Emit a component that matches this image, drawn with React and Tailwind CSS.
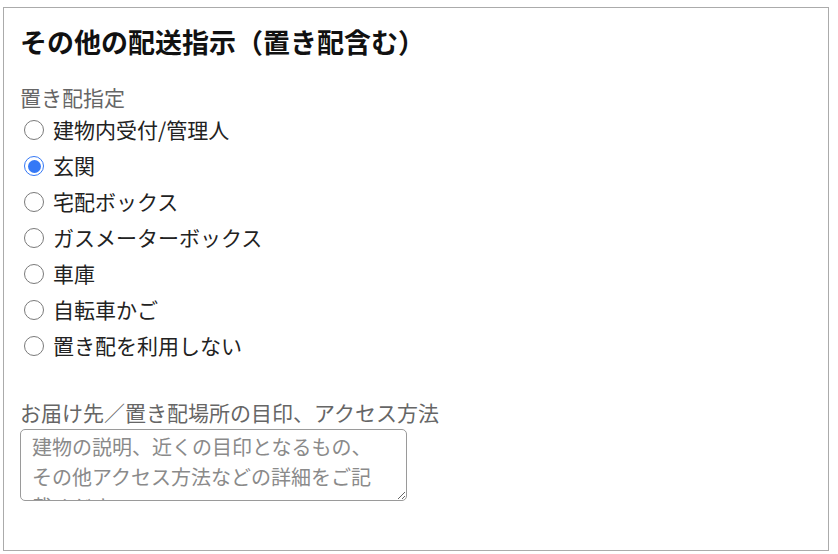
import { useState } from 'react';

const options = [
  '建物内受付/管理人',
  '玄関',
  '宅配ボックス',
  'ガスメーターボックス',
  '車庫',
  '自転車かご',
  '置き配を利用しない',
];

function Radio({ checked }) {
  if (checked) {
    return (
      <span className="flex h-[20px] w-[20px] shrink-0 items-center justify-center rounded-full border-[1.5px] border-[#3478f6] bg-white">
        <span className="h-[13px] w-[13px] rounded-full bg-[#3478f6]" />
      </span>
    );
  }
  return <span className="h-[20px] w-[20px] shrink-0 rounded-full border border-[#7a7a7a] bg-white" />;
}

export default function App() {
  const [selected, setSelected] = useState('玄関');

  return (
    <div className="min-h-[554px] bg-white pl-[3px] pt-[7px] font-['Noto_Sans_CJK_JP','Noto_Sans',sans-serif] text-[#222]">
      <div className="h-[544px] w-[826px] border border-[#ababab] px-4 pt-4">
        {/* Heading */}
        <h2 className="text-[27px] font-bold leading-[36px] text-[#111]">
          その他の配送指示（置き配含む）
        </h2>

        {/* Placement options */}
        <div className="mt-[22px] text-[21px] leading-[30px] text-[#666]">置き配指定</div>
        <div>
          {options.map((opt) => (
            <label
              key={opt}
              onClick={() => setSelected(opt)}
              className="flex h-[36px] cursor-pointer items-center gap-[9px] pl-1 text-[21px]"
            >
              <Radio checked={selected === opt} />
              <span>{opt}</span>
            </label>
          ))}
        </div>

        {/* Landmark / access */}
        <div className="mt-[33px] text-[21px] leading-[30px] text-[#666]">
          お届け先／置き配場所の目印、アクセス方法
        </div>
        <textarea
          className="mt-[2px] block h-[72px] w-[387px] rounded-[5px] border border-[#9a9a9a] pl-[11px] pr-[20px] pt-[2px] text-[20px] leading-[30px] outline-none placeholder:text-[#8a8a8a]"
          placeholder="建物の説明、近くの目印となるもの、その他アクセス方法などの詳細をご記載ください。"
        />
      </div>
    </div>
  );
}
